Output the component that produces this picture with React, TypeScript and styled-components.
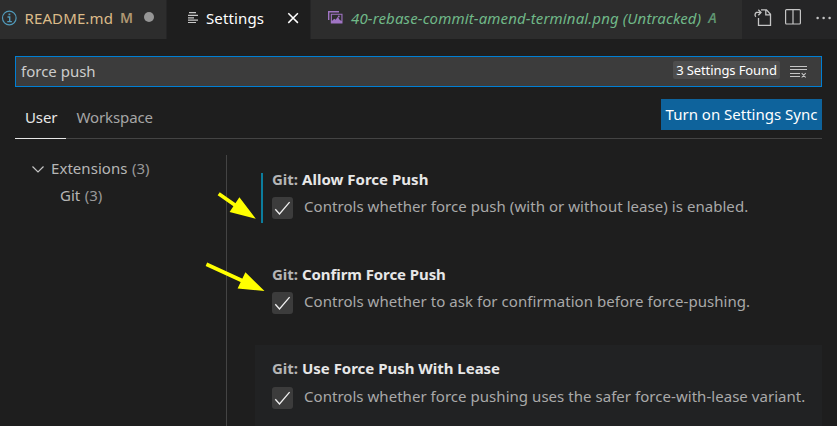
import React from 'react';
import styled, { createGlobalStyle } from 'styled-components';

const GlobalStyle = createGlobalStyle`
  * { box-sizing: border-box; }
  body {
    margin: 0;
    overflow: hidden;
    background: #1e1e1e;
    color: #cccccc;
    font: 400 15px/20px "Noto Sans", "Open Sans", sans-serif;
  }
`;

const Window = styled.div`
  position: relative;
  display: flex;
  flex-direction: column;
  width: 837px;
  height: 426px;
  overflow: hidden;
  background: #1e1e1e;
`;

const Label = styled.span<{ $track?: number }>`
  letter-spacing: ${(p) => p.$track ?? 0}px;
  white-space: pre;
`;

/* Tab strip */
const TabBar = styled.header`
  display: flex;
  flex: none;
  height: 39px;
  background: #252526;
`;

const Tab = styled.div<{ $width: number; $active?: boolean; $tone: string }>`
  display: flex;
  flex: none;
  align-items: flex-start;
  width: ${(p) => p.$width}px;
  padding-top: 8px;
  border-right: 1px solid #252526;
  background: ${(p) => (p.$active ? '#1e1e1e' : '#2d2d2d')};
  color: ${(p) => p.$tone};
`;

const FileName = styled(Label)<{ $italic?: boolean; $left: number }>`
  margin-left: ${(p) => p.$left}px;
  font-style: ${(p) => (p.$italic ? 'italic' : 'normal')};
`;

const GitStatus = styled.span<{ $italic?: boolean }>`
  margin-left: 7px;
  font-size: 14px;
  font-weight: 600;
  font-style: ${(p) => (p.$italic ? 'italic' : 'normal')};
  opacity: 0.75;
`;

const DirtyDot = styled.span`
  width: 10px;
  height: 10px;
  margin: 4px 0 0 11px;
  border-radius: 50%;
  background: #969696;
`;

const Icon = styled.svg<{ $left?: number; $top?: number }>`
  display: block;
  flex: none;
  margin: ${(p) => p.$top ?? 0}px 0 0 ${(p) => p.$left ?? 0}px;
  overflow: visible;
`;

const EditorActions = styled.div`
  display: flex;
  flex: 1;
`;

/* Search row */
const Header = styled.section`
  display: flex;
  flex-direction: column;
  flex: none;
  margin: 17px 15px 0;
`;

const SearchBox = styled.div`
  display: flex;
  height: 31px;
  padding: 0 14px 0 5px;
  border: 1px solid #007fd4;
  background: #3c3c3c;
  align-items: flex-start;
`;

const Query = styled(Label)`
  flex: 1;
  margin-top: 4px;
`;

const CountBadge = styled.span`
  width: 107px;
  height: 18px;
  margin-top: 4px;
  border-radius: 2px;
  background: #4d4d4d;
  color: #ffffff;
  font-size: 13px;
  line-height: 18px;
  letter-spacing: -0.1px;
  text-align: center;
  white-space: nowrap;
`;

const ScopeRow = styled.div`
  display: flex;
  justify-content: space-between;
  height: 52px;
  border-bottom: 1px solid #444444;
`;

const Scopes = styled.nav`
  display: flex;
`;

const Scope = styled.span<{ $active?: boolean }>`
  height: 52px;
  padding: 20px 9px 0 10px;
  border-bottom: 1px solid ${(p) => (p.$active ? '#e7e7e7' : 'transparent')};
  color: ${(p) => (p.$active ? '#e7e7e7' : '#a6a6a6')};
  letter-spacing: -0.1px;
`;

const SyncButton = styled.button`
  width: 161px;
  height: 31px;
  margin-top: 12px;
  padding: 0;
  border: 0;
  background: #0e639c;
  color: #ffffff;
  font: inherit;
  line-height: 31px;
  white-space: nowrap;
`;

/* Body */
const Body = styled.main`
  display: flex;
  flex: 1;
  min-height: 0;
  margin: 16px 15px 0;
`;

const Tree = styled.aside`
  display: flex;
  flex-direction: column;
  width: 212px;
  border-right: 1px solid #444444;
`;

const TreeRow = styled.div<{ $indent: number }>`
  display: flex;
  height: 27px;
  padding: 3px 0 0 ${(p) => p.$indent}px;
  color: #b6b6b6;
`;

const Count = styled.span`
  margin-left: 4.5px;
  color: #989898;
`;

const SettingsList = styled.div`
  flex: 1;
  margin-left: 28px;
`;

const Setting = styled.article<{ $hovered?: boolean }>`
  display: flex;
  height: 95px;
  padding: 18px 0 0 6px;
  background: ${(p) => (p.$hovered ? '#212223' : 'transparent')};
`;

const ModifiedBar = styled.span<{ $on?: boolean }>`
  flex: none;
  width: 2px;
  height: 50px;
  margin-right: 9px;
  background: ${(p) => (p.$on ? '#0c7d9d' : 'transparent')};
`;

const Title = styled.h3<{ $lift?: boolean }>`
  display: flex;
  height: 20px;
  margin: ${(p) => (p.$lift ? '-5px 0 9px' : '-4px 0 8px')};
  font-size: 15px;
  font-weight: 700;
  line-height: 20px;
  color: #e7e7e7;
`;

const Category = styled.span`
  width: 30px;
  color: #b5b5b5;
`;

const Control = styled.div`
  display: flex;
`;

const Checkbox = styled.span`
  flex: none;
  width: 21px;
  height: 22px;
  border-radius: 3px;
  background: #3c3c3c;
`;

const Description = styled(Label)`
  margin: -1px 0 0 11px;
  color: #a9a9a9;
`;

const Annotations = styled.svg`
  position: absolute;
  left: 0;
  top: 0;
  pointer-events: none;
`;

const settings = [
  { name: 'Allow Force Push', nameTrack: 0.02, text: 'Controls whether force push (with or without lease) is enabled.', track: 0.05, modified: true },
  { name: 'Confirm Force Push', nameTrack: -0.08, text: 'Controls whether to ask for confirmation before force-pushing.', track: 0.05 },
  { name: 'Use Force Push With Lease', nameTrack: -0.02, text: 'Controls whether force pushing uses the safer force-with-lease variant.', track: 0.04, hovered: true },
];

export default function App() {
  return (
    <>
      <GlobalStyle />
      <Window>
        <TabBar>
          <Tab $width={167} $tone="#dcbb89">
            <Icon width="16" height="16" $left={1} $top={1.5} fill="none" stroke="#519aba">
              <circle cx="8.3" cy="8" r="6.8" strokeWidth="1.2" />
              <path d="M6.5 7h2.2v4.5M6.3 11.6h4.6" strokeWidth="1.4" />
              <path d="M7.5 4.4h1.8" strokeWidth="1.7" />
            </Icon>
            <FileName $left={7.5} $track={0.12}>README.md</FileName>
            <GitStatus>M</GitStatus>
            <DirtyDot />
          </Tab>
          <Tab $width={144} $active $tone="#ffffff">
            <Icon width="11" height="11" $left={21} $top={4} stroke="#c8c8c8" strokeWidth="1.2">
              <path d="M1 .6h7M0 3.4h10M0 5.9h6M0 8.1h10M0 10.5h8" />
            </Icon>
            <FileName $left={7} $track={0.12}>Settings</FileName>
            <Icon width="10" height="10" $left={24} $top={4.5} stroke="#ffffff" strokeWidth="1.5">
              <path d="M.3.3l9.6 9.6M9.9.3L.3 9.9" />
            </Icon>
          </Tab>
          <Tab $width={432} $tone="#70b888">
            <Icon width="15" height="13" $left={17} $top={3} fill="#a074c4">
              <path d="M0 0h11v1.4H1.4V9H0z" />
              <path fillRule="evenodd" d="M2.8 2.7H14.5V12.5H2.8zM3.9 3.8V10l2.3-2.2 1.4 1 2.3-3.1 1.7 3 1.8 1.4V3.8z" />
              <circle cx="10.8" cy="5.5" r=".9" />
            </Icon>
            <FileName $left={8} $italic $track={0.14}>40-rebase-commit-amend-terminal.png (Untracked)</FileName>
            <GitStatus $italic>A</GitStatus>
          </Tab>
          <EditorActions>
            <Icon width="19" height="18" $left={10} $top={9} fill="none" stroke="#c5c5c5" strokeWidth="1.3">
              <path d="M5.5 9v7.3h12V5.2L13.5.8H8M12.8.8v5h4.7" />
              <path d="M2.8 7.8A2.8 2.8 0 0 1 3.5 3.4H7.4M5.3.8l2.7 2.6-2.7 2.8" />
            </Icon>
            <Icon width="16" height="16" $left={13} $top={9} fill="none" stroke="#c5c5c5" strokeWidth="1.2">
              <rect x=".6" y=".6" width="14.8" height="14.4" rx="1" />
              <path d="M8 .6V15" />
            </Icon>
            <Icon width="16" height="4" $left={15} $top={15.5} fill="#c5c5c5">
              <circle cx="1.6" cy="2" r="1.25" />
              <circle cx="7.6" cy="2" r="1.25" />
              <circle cx="13.6" cy="2" r="1.25" />
            </Icon>
          </EditorActions>
        </TabBar>

        <Header>
          <SearchBox>
            <Query>force push</Query>
            <CountBadge>3 Settings Found</CountBadge>
            <Icon width="17" height="13" $left={10} $top={8} fill="none" stroke="#c5c5c5" strokeWidth="1.1">
              <path d="M0 1.5h17M0 4.5h17M0 8.5h10M0 11.5h10M11.7 8.2l4 4.3M15.7 8.2l-4 4.3" />
            </Icon>
          </SearchBox>
          <ScopeRow>
            <Scopes>
              <Scope $active>User</Scope>
              <Scope>Workspace</Scope>
            </Scopes>
            <SyncButton>Turn on Settings Sync</SyncButton>
          </ScopeRow>
        </Header>

        <Body>
          <Tree>
            <TreeRow $indent={17}>
              <Icon width="12" height="7" $top={8} fill="none" stroke="#c5c5c5" strokeWidth="1.2">
                <path d="M.5.5L6 6 11.5.5" />
              </Icon>
              <FileName $left={7} $track={0.05}>Extensions</FileName>
              <Count>(3)</Count>
            </TreeRow>
            <TreeRow $indent={45}>
              <Label>Git</Label>
              <Count>(3)</Count>
            </TreeRow>
          </Tree>
          <SettingsList>
            {settings.map((s) => (
              <Setting key={s.name} $hovered={s.hovered}>
                <ModifiedBar $on={s.modified} />
                <div>
                  <Title $lift={s.hovered}>
                    <Category>Git:</Category>
                    <Label $track={s.nameTrack}>{s.name}</Label>
                  </Title>
                  <Control>
                    <Checkbox>
                      <Icon width="21" height="22" fill="none" stroke="#f0f0f0" strokeWidth="1.3">
                        <path d="M3.3 12.3L7.5 17 17.6 5.2" />
                      </Icon>
                    </Checkbox>
                    <Description $track={s.track}>{s.text}</Description>
                  </Control>
                </div>
              </Setting>
            ))}
          </SettingsList>
        </Body>

        <Annotations width="837" height="426" fill="#ffff00" stroke="#ffff00">
          <path d="M218.7 193.8L237 206.4M206.4 264.2L244 281.5" strokeWidth="3.7" />
          <path stroke="none" d="M239.4 197.2L229.6 212 255.8 218.8zM245.4 272.2L237.6 288.5 264.5 291z" />
        </Annotations>
      </Window>
    </>
  );
}
